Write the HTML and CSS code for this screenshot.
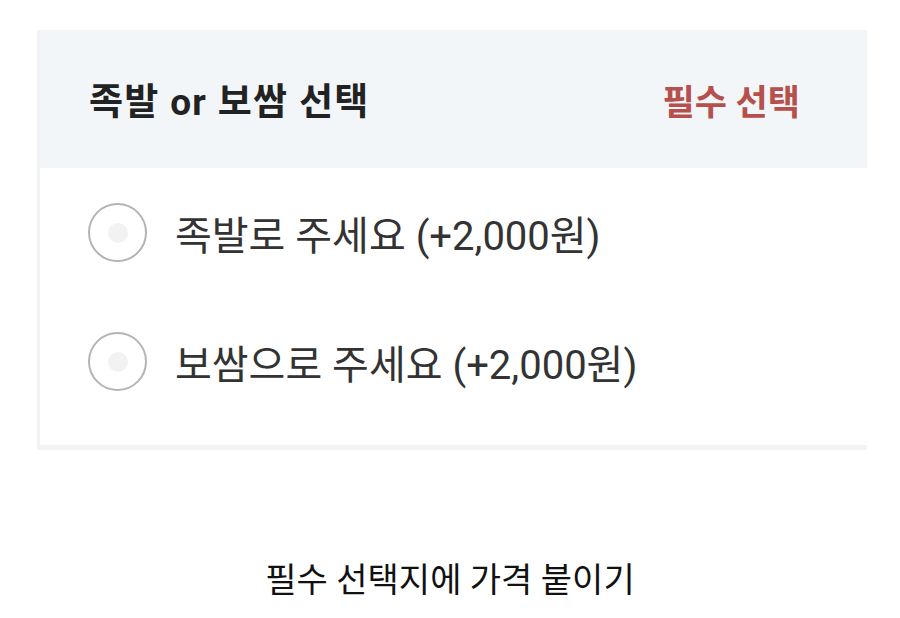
FILE: index.html
```html
<!DOCTYPE html>
<html lang="ko">

<head>
  <meta charset="UTF-8">
  <meta name="viewport" content="width=device-width, initial-scale=1.0">
  <title>필수 선택지에 가격 붙이기</title>
  <link rel="stylesheet" href="styles.css">
</head>

<body>
  <div class="page">
    <section class="option-card">
      <div class="option-head">
        <h2>족발 or 보쌈 선택</h2>
        <span class="required">필수 선택</span>
      </div>
      <ul class="option-list">
        <li class="option-row">
          <span class="radio"></span>
          <span class="option-name">족발로 주세요 (+2,000원)</span>
        </li>
        <li class="option-row">
          <span class="radio"></span>
          <span class="option-name">보쌈으로 주세요 (+2,000원)</span>
        </li>
      </ul>
    </section>
    <p class="caption">필수 선택지에 가격 붙이기</p>
  </div>
</body>

</html>
```

FILE: styles.css
```css
* {
  box-sizing: border-box;
  margin: 0;
  padding: 0;
}

body {
  background-color: #fff;
  font-family: Roboto, "Noto Sans CJK KR", sans-serif;
}

.page {
  padding-top: 30px;
}

.option-card {
  margin: 0 33px 0 37px;
  border-left: 3px solid #f1f2f3;
  border-bottom: 5px solid #f2f3f4;
}

.option-head {
  height: 138px;
  background-color: #f3f6f9;
  display: flex;
  align-items: center;
  justify-content: space-between;
  padding: 0 67px 0 49px;
}

.option-head h2 {
  font-size: 37px;
  font-weight: 700;
  letter-spacing: 1.3px;
  color: #222;
}

.required {
  font-size: 35px;
  font-weight: 700;
  color: #b6504c;
}

.option-list {
  list-style: none;
  padding-bottom: 19px;
}

.option-row {
  height: 129px;
  display: flex;
  align-items: center;
  padding-left: 48px;
  gap: 28px;
}

.radio {
  width: 59px;
  height: 59px;
  border-radius: 50%;
  border: 2px solid #b4b4b4;
  display: flex;
  align-items: center;
  justify-content: center;
}

.radio::after {
  content: "";
  width: 20px;
  height: 20px;
  border-radius: 50%;
  background-color: #f2f2f2;
}

.option-name {
  font-size: 40px;
  color: #333;
}

.caption {
  margin-top: 110px;
  text-align: center;
  font-size: 34px;
  line-height: 40px;
  color: #111;
}
```
